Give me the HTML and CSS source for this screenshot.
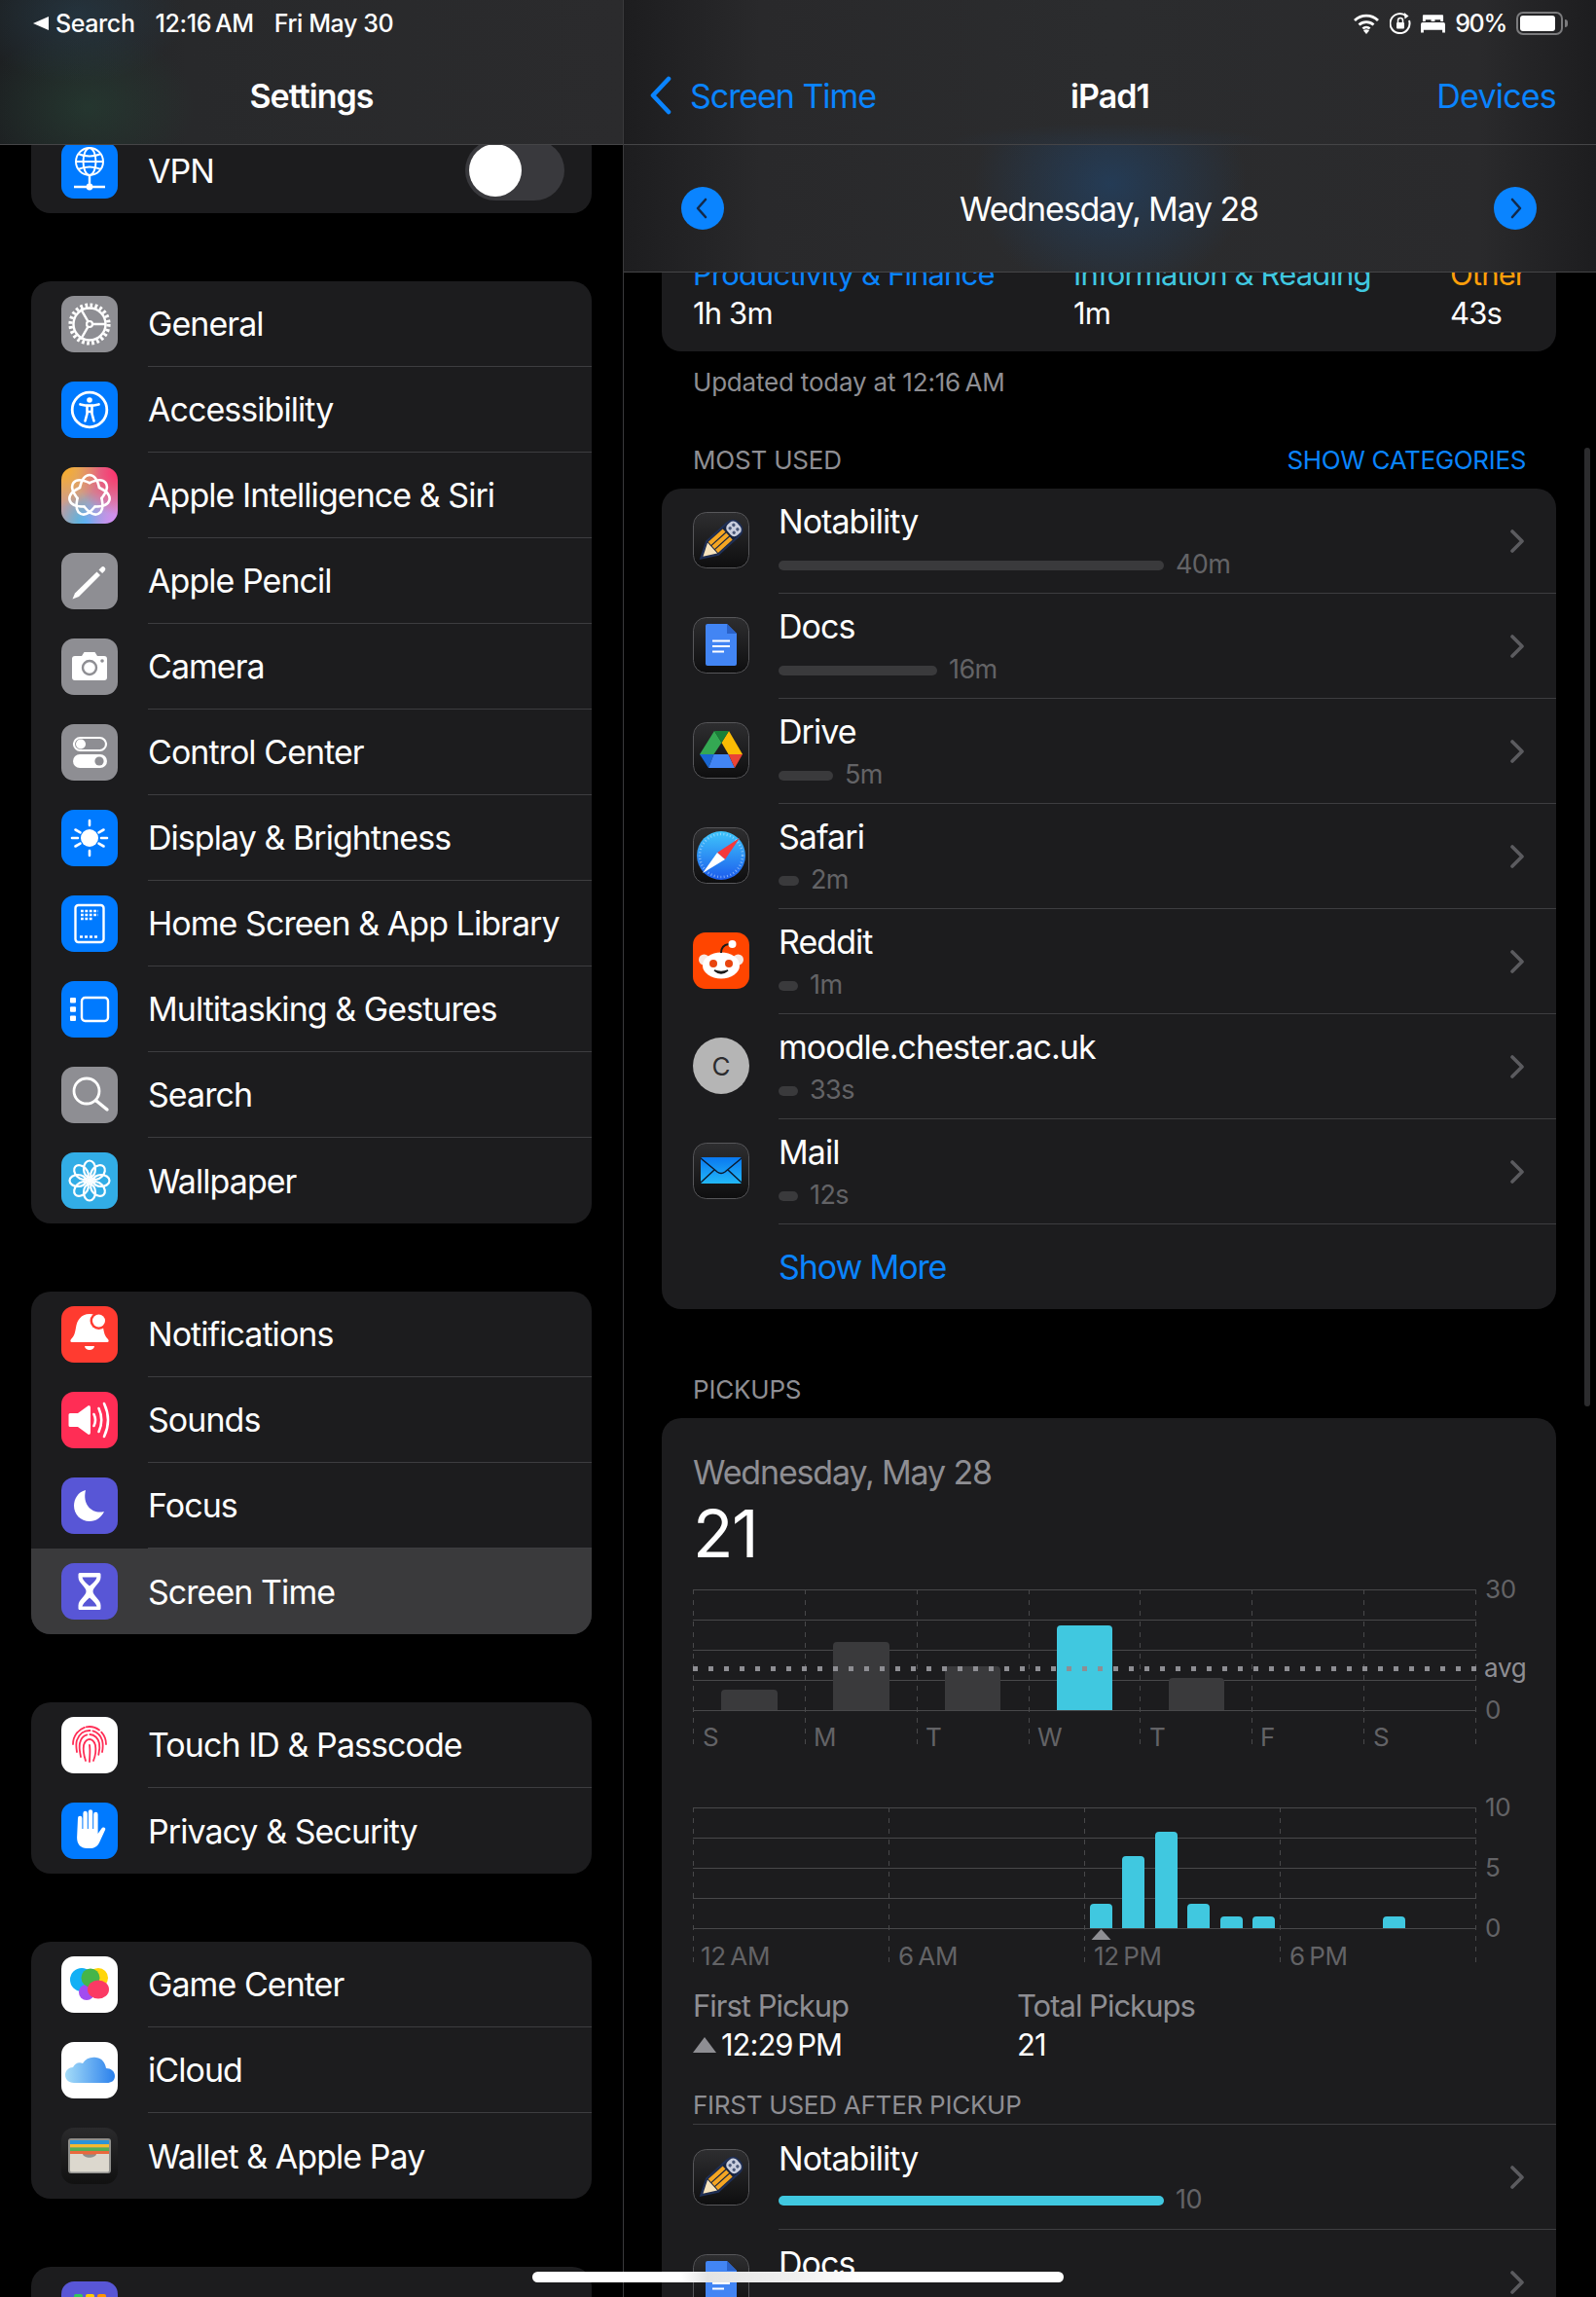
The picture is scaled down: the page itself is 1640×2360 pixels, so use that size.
FILE: index.html
```html
<!DOCTYPE html>
<html lang="en">
<head>
<meta charset="utf-8">
<title>Settings - Screen Time</title>
<link rel="stylesheet" href="styles.css">
</head>
<body>
<svg class="defs" width="0" height="0" aria-hidden="true">
  <defs>
    <linearGradient id="g-tile" x1="0" y1="0" x2="0" y2="1"><stop offset="0" stop-color="#2e2e30"/><stop offset="1" stop-color="#0e0e0f"/></linearGradient>
    <linearGradient id="g-safari" x1="0" y1="0" x2="0" y2="1"><stop offset="0" stop-color="#3fc6fb"/><stop offset="1" stop-color="#1c5ced"/></linearGradient>
    <linearGradient id="g-mail" x1="0" y1="0" x2="0" y2="1"><stop offset="0" stop-color="#0a78f0"/><stop offset="1" stop-color="#22b8f8"/></linearGradient>
    <linearGradient id="g-cloud" x1="0" y1="0" x2="1" y2="0"><stop offset="0" stop-color="#a5dcf8"/><stop offset="1" stop-color="#2a80ec"/></linearGradient>
    <symbol id="app-notability" viewBox="0 0 58 58">
      <rect x=".5" y=".5" width="57" height="57" rx="13" fill="url(#g-tile)" stroke="#57575a"/>
      <g transform="rotate(48 29 29)">
        <path d="M20 13q0-9 9-9t9 9v28l-9 16-9-16z" fill="#17233f" stroke="#1f2f55" stroke-width="2"/>
        <rect x="21.5" y="5" width="15" height="13" rx="5" fill="#c9cede"/>
        <circle cx="26" cy="9" r="1.7" fill="#4a5878"/><circle cx="32" cy="9" r="1.7" fill="#4a5878"/><circle cx="26" cy="14" r="1.7" fill="#4a5878"/><circle cx="32" cy="14" r="1.7" fill="#4a5878"/>
        <rect x="21.5" y="20" width="4.2" height="20" fill="#f5a623"/><rect x="26.9" y="20" width="4.2" height="20" fill="#f5a623"/><rect x="32.3" y="20" width="4.2" height="20" fill="#f5a623"/>
        <path d="M21.5 41h15l-7.500 13z" fill="#f6e3bd"/>
      </g>
    </symbol>
    <symbol id="app-docs" viewBox="0 0 58 58">
      <rect x=".5" y=".5" width="57" height="57" rx="13" fill="url(#g-tile)" stroke="#57575a"/>
      <path d="M15 7h20l10 10v31a2 2 0 0 1-2 2H15a2 2 0 0 1-2-2V9a2 2 0 0 1 2-2z" fill="#4285f4"/>
      <path d="M35 7l10 10H35z" fill="#2a62c8"/>
      <path d="M20 24.500h18M20 30h18M20 35.500h12" stroke="#fff" stroke-width="2.200"/>
    </symbol>
    <symbol id="chev" viewBox="0 0 14 24"><path d="M2 2l10 10L2 22" fill="none" stroke="#5b5b5f" stroke-width="3.600" stroke-linecap="round" stroke-linejoin="round"/></symbol>
  </defs>
</svg>

<div class="ipad">
  <aside class="sidebar">
    <header class="glass glass-left">
      <div class="status">
        <span class="back-tri"></span><span class="status-search">Search</span>
        <span class="status-time">12:16&#8201;AM</span>
        <span class="status-date">Fri May 30</span>
      </div>
      <div class="nav-title-left">Settings</div>
    </header>

    <div class="list">
      <section class="group">
        <div class="row">
          <svg class="ico bg-blue" viewBox="0 0 58 58"><g fill="none" stroke="#fff" stroke-width="2"><circle cx="29" cy="20" r="14"/><ellipse cx="29" cy="20" rx="6.500" ry="14"/><path d="M17 12q12 5 24 0M15.500 20h27M17 28q12-5 24 0"/></g><path d="M29 34v12M13 46h32" stroke="#fff" stroke-width="2.400"/><circle cx="29" cy="46" r="3.400" fill="#fff"/></svg>
          <div class="label label-flex">VPN<span class="toggle"><span class="knob"></span></span></div>
        </div>
      </section>

      <section class="group">
        <div class="row">
          <svg class="ico bg-gray" viewBox="0 0 58 58"><g fill="none" stroke="#fff"><circle cx="29" cy="29" r="19.500" stroke-width="4.200" stroke-dasharray="2.700 2.400"/><circle cx="29" cy="29" r="16.500" stroke-width="2.400"/><path d="M32 29h14M27.500 31.600l-7.500 13M27.500 26.400l-7.500-13" stroke-width="2.400"/><circle cx="29" cy="29" r="3" stroke-width="2.200"/></g></svg>
          <div class="label">General</div>
        </div>
        <div class="row">
          <svg class="ico bg-blue" viewBox="0 0 58 58"><circle cx="29" cy="29" r="17.800" fill="none" stroke="#fff" stroke-width="2.800"/><circle cx="29" cy="19" r="2.800" fill="#fff"/><path d="M19.500 23.500q9.500 2.500 19 0" fill="none" stroke="#fff" stroke-width="2.800" stroke-linecap="round"/><path d="M26.500 25v8l-2 7.500M31.500 25v8l2 7.500M26.500 31h5" fill="none" stroke="#fff" stroke-width="2.600" stroke-linecap="round"/></svg>
          <div class="label">Accessibility</div>
        </div>
        <div class="row">
          <svg class="ico bg-ai" viewBox="0 0 58 58"><g fill="none" stroke="#fff" stroke-width="2.600" stroke-linecap="round"><path d="M19 21Q22 8 29 8t10 13"/><path transform="rotate(51.430 29 29)" d="M19 21Q22 8 29 8t10 13"/><path transform="rotate(102.860 29 29)" d="M19 21Q22 8 29 8t10 13"/><path transform="rotate(154.290 29 29)" d="M19 21Q22 8 29 8t10 13"/><path transform="rotate(205.710 29 29)" d="M19 21Q22 8 29 8t10 13"/><path transform="rotate(257.140 29 29)" d="M19 21Q22 8 29 8t10 13"/><path transform="rotate(308.570 29 29)" d="M19 21Q22 8 29 8t10 13"/></g></svg>
          <div class="label">Apple Intelligence &amp; Siri</div>
        </div>
        <div class="row">
          <svg class="ico bg-gray" viewBox="0 0 58 58"><path d="M11.500 47.500l2.500-6L36.500 19.500l3.500 3.500L18 45z" fill="#fff"/><path d="M38.500 17.500l2.500-2.500a2.500 2.500 0 0 1 3.600 0 2.500 2.500 0 0 1 0 3.500l-2.500 2.500z" fill="#fff"/></svg>
          <div class="label">Apple Pencil</div>
        </div>
        <div class="row">
          <svg class="ico bg-gray" viewBox="0 0 58 58"><path d="M14 18h7l2.500-4h11l2.500 4h7a3 3 0 0 1 3 3v19a3 3 0 0 1-3 3H14a3 3 0 0 1-3-3V21a3 3 0 0 1 3-3z" fill="#fff"/><circle cx="29" cy="30" r="7" fill="none" stroke="#8e8e93" stroke-width="2.400"/><circle cx="42" cy="23" r="1.800" fill="#8e8e93"/></svg>
          <div class="label">Camera</div>
        </div>
        <div class="row">
          <svg class="ico bg-gray" viewBox="0 0 58 58"><rect x="13" y="14" width="33" height="13" rx="6.500" fill="none" stroke="#fff" stroke-width="2.200"/><circle cx="20" cy="20.500" r="5" fill="#fff"/><rect x="12" y="31" width="35" height="14" rx="7" fill="#fff"/><circle cx="39" cy="38" r="4.600" fill="#8e8e93"/></svg>
          <div class="label">Control Center</div>
        </div>
        <div class="row">
          <svg class="ico bg-blue" viewBox="0 0 58 58"><circle cx="29" cy="29" r="9" fill="#fff"/><path d="M29 11v5M29 42v5M11 29h6M41 29h6M14.500 20.500l5 2.800M38.500 34.700l5 2.800M14.500 37.500l5-2.800M38.500 23.300l5-2.800" stroke="#fff" stroke-width="2.600" stroke-linecap="round"/></svg>
          <div class="label">Display &amp; Brightness</div>
        </div>
        <div class="row">
          <svg class="ico bg-blue" viewBox="0 0 58 58"><rect x="14.500" y="10" width="29" height="38" rx="3" fill="none" stroke="#fff" stroke-width="2.400"/><path d="M20 16h18M20 20h18M20 24h12" stroke="#fff" stroke-width="2.400" stroke-dasharray="2.800 1.600"/><path d="M19 42.500h20" stroke="#fff" stroke-width="2.400" stroke-dasharray="3 2"/></svg>
          <div class="label">Home Screen &amp; App Library</div>
        </div>
        <div class="row">
          <svg class="ico bg-blue" viewBox="0 0 58 58"><rect x="21" y="17" width="27" height="24" rx="3.500" fill="none" stroke="#fff" stroke-width="2.400"/><rect x="9" y="17" width="6" height="5.500" rx="1" fill="#fff"/><rect x="9" y="26.300" width="6" height="5.500" rx="1" fill="#fff"/><rect x="9" y="35.500" width="6" height="5.500" rx="1" fill="#fff"/></svg>
          <div class="label">Multitasking &amp; Gestures</div>
        </div>
        <div class="row">
          <svg class="ico bg-gray" viewBox="0 0 58 58"><circle cx="26" cy="25" r="13" fill="none" stroke="#fff" stroke-width="2.800"/><path d="M36 35l11 9" stroke="#fff" stroke-width="3.400" stroke-linecap="round"/></svg>
          <div class="label">Search</div>
        </div>
        <div class="row">
          <svg class="ico bg-cyan" viewBox="0 0 58 58"><g fill="none" stroke="#fff" stroke-width="2.200"><ellipse cx="29" cy="17" rx="6" ry="8.500"/><ellipse cx="29" cy="41" rx="6" ry="8.500"/><ellipse cx="17" cy="29" rx="8.500" ry="6"/><ellipse cx="41" cy="29" rx="8.500" ry="6"/><ellipse cx="20.500" cy="20.500" rx="6" ry="8.500" transform="rotate(-45 20.500 20.500)"/><ellipse cx="37.500" cy="20.500" rx="6" ry="8.500" transform="rotate(45 37.500 20.500)"/><ellipse cx="20.500" cy="37.500" rx="6" ry="8.500" transform="rotate(45 20.500 37.500)"/><ellipse cx="37.500" cy="37.500" rx="6" ry="8.500" transform="rotate(-45 37.500 37.500)"/></g><circle cx="29" cy="29" r="3" fill="#fff"/></svg>
          <div class="label">Wallpaper</div>
        </div>
      </section>

      <section class="group">
        <div class="row">
          <svg class="ico bg-red" viewBox="0 0 58 58"><path d="M29 8c-9 0-13 7-14 14-1 6-2 9-5 12-1 1-1 3 1 3h36c2 0 2-2 1-3-3-3-4-6-5-12-1-7-5-14-14-14z" fill="#fff"/><path d="M24 41h10a5 4 0 0 1-10 0z" fill="#fff"/><circle cx="38.500" cy="15" r="9" fill="#ff3b30"/><circle cx="38.500" cy="15" r="6.500" fill="#fff"/></svg>
          <div class="label">Notifications</div>
        </div>
        <div class="row">
          <svg class="ico bg-pink" viewBox="0 0 58 58"><path d="M9 22h8l11-8a2 2 0 0 1 2 2v26a2 2 0 0 1-2 2L17 36H9a1.500 1.500 0 0 1-1.500-1.500v-11A1.500 1.500 0 0 1 9 22z" fill="#fff"/><path d="M33.500 23q3 6 0 12M38.500 17q5.500 12 0 24M44 12q8 17 0 34" fill="none" stroke="#fff" stroke-width="2.600" stroke-linecap="round"/></svg>
          <div class="label">Sounds</div>
        </div>
        <div class="row">
          <svg class="ico bg-indigo" viewBox="0 0 58 58"><path d="M25 13C17 15 13 22 13 29c0 9 7 16 16 16 7 0 12-4 15-10-10 3-23-5-19-22z" fill="#fff"/></svg>
          <div class="label">Focus</div>
        </div>
        <div class="row row-selected">
          <svg class="ico bg-indigo" viewBox="0 0 58 58"><path d="M19 10h20a1.500 1.500 0 0 1 1.500 1.500v3c0 6-8 10-8 14.500s8 8.500 8 14.500v3A1.500 1.500 0 0 1 39 48H19a1.500 1.500 0 0 1-1.500-1.500v-3c0-6 8-10 8-14.500s-8-8.500-8-14.500v-3A1.500 1.500 0 0 1 19 10z" fill="#fff"/><path d="M21.500 14.500h15q-1 4-7.500 9-6.500-5-7.500-9zM21.500 44.500q1-3.500 7.500-9 6.500 5.500 7.500 9z" fill="#5856d6"/></svg>
          <div class="label">Screen Time</div>
        </div>
      </section>

      <section class="group">
        <div class="row">
          <svg class="ico bg-white" viewBox="0 0 58 58"><g fill="none" stroke="#ff2d55" stroke-width="1.800" stroke-linecap="round"><path d="M12 28C12 18 20 10 29 10s17 8 17 18" stroke-dasharray="22 2 14 3"/><path d="M16 36c-1-6-1-9 0-12 2-6 7-10 13-10s11 4 13 10c1 4 1 7 0 12" stroke-dasharray="30 3"/><path d="M20 41c-1-6-2-9-1-14 1-5 5-9 10-9s9 4 10 9c1 5 0 9-1 13" stroke-dasharray="26 3"/><path d="M25 45c-2-6-3-10-2-16 1-3 3-6 6-6s5 3 6 6c1 6 0 11-2 16"/><path d="M29 29c1 6 0 12 0 17"/></g></svg>
          <div class="label">Touch ID &amp; Passcode</div>
        </div>
        <div class="row">
          <svg class="ico bg-blue" viewBox="0 0 58 58"><path d="M17 16a2.200 2.200 0 0 1 4.400 0v11h1V11a2.200 2.200 0 0 1 4.400 0v16h1V9.500a2.200 2.200 0 0 1 4.400 0V27h1V12a2.200 2.200 0 0 1 4.400 0v20l3.500-5c2-3 5-1 4 1l-6 13c-2 4-5 6-10 6h-3c-6 0-10-4-10-11z" fill="#fff"/></svg>
          <div class="label">Privacy &amp; Security</div>
        </div>
      </section>

      <section class="group">
        <div class="row">
          <svg class="ico bg-white" viewBox="0 0 58 58"><circle cx="38" cy="22" r="10" fill="#ffd60a"/><circle cx="21" cy="24" r="12" fill="#12b0f5"/><circle cx="26" cy="37" r="8" fill="#a24cf0"/><circle cx="30" cy="22" r="9.500" fill="#45b54a"/><ellipse cx="38" cy="34" rx="11" ry="9.500" fill="#fb3a64"/></svg>
          <div class="label">Game Center</div>
        </div>
        <div class="row">
          <svg class="ico bg-white" viewBox="0 0 58 58"><path d="M13 42C7 42 4 38 4 34c0-5 4-8 8-8 2-4 6-6 10-4 3-5 8-7 14-6 6 1 9 5 10 11 5 0 9 3 9 8s-4 7-8 7z" fill="url(#g-cloud)"/></svg>
          <div class="label">iCloud</div>
        </div>
        <div class="row">
          <svg class="ico bg-wallet" viewBox="0 0 58 58"><rect x="7" y="11" width="44" height="36" rx="3" fill="#8f8f8c"/><rect x="9" y="13" width="40" height="4" fill="#2b93d8"/><rect x="9" y="17" width="40" height="3.500" fill="#f5b82e"/><rect x="9" y="20.500" width="40" height="3.500" fill="#53ad54"/><rect x="9" y="24" width="40" height="3.500" fill="#e9683d"/><path d="M9 27h13c1 5 13 5 14 0h13v17a1.500 1.500 0 0 1-1.500 1.500h-37A1.500 1.500 0 0 1 9 44z" fill="#dcd8ce"/></svg>
          <div class="label">Wallet &amp; Apple Pay</div>
        </div>
      </section>

      <section class="group">
        <div class="row">
          <svg class="ico bg-indigo" viewBox="0 0 58 58"><rect x="13" y="13" width="9" height="9" rx="2" fill="#34c759"/><rect x="25" y="13" width="9" height="9" rx="2" fill="#ffcc00"/><rect x="37" y="13" width="9" height="9" rx="2" fill="#ff9500"/></svg>
          <div class="label"></div>
        </div>
      </section>
    </div>
  </aside>

  <main class="detail">
    <header class="glass glass-right">
      <div class="status status-right">
        <svg class="st-wifi" viewBox="0 0 28 22"><path d="M2 8a17 17 0 0 1 24 0M6.500 12.500a11 11 0 0 1 15 0M10.500 16.500a5 5 0 0 1 7 0" fill="none" stroke="#fff" stroke-width="2.800"/><path d="M14 22l-3-3.500a4 4 0 0 1 6 0z" fill="#fff"/></svg>
        <svg class="st-lock" viewBox="0 0 22 22"><path d="M17 3.500A10 10 0 1 0 20 8" fill="none" stroke="#fff" stroke-width="2"/><path d="M15 0l4.500 3.500-4 3z" fill="#fff"/><rect x="7" y="10" width="8" height="6.500" rx="1" fill="#fff"/><path d="M8.500 10V8a2.500 2.500 0 0 1 5 0v2" fill="none" stroke="#fff" stroke-width="1.500"/></svg>
        <svg class="st-bed" viewBox="0 0 26 20"><path d="M3 1h20a1 1 0 0 1 1 1v6h-3V6h-6v2h-4V6H5v2H2V2a1 1 0 0 1 1-1z" fill="#fff"/><path d="M2 9h22a2 2 0 0 1 2 2v9h-3v-3H3v3H0v-9a2 2 0 0 1 2-2z" fill="#fff"/></svg>
        <span class="st-pct">90%</span>
        <span class="battery"><span class="battery-fill"></span></span>
      </div>
      <nav class="nav-right">
        <a class="back"><svg class="back-chev" viewBox="0 0 24 40"><path d="M20 3L4 20l16 17" fill="none" stroke="#0a84ff" stroke-width="4.600" stroke-linecap="round" stroke-linejoin="round"/></svg>Screen Time</a>
        <div class="nav-title">iPad1</div>
        <a class="devices">Devices</a>
      </nav>
    </header>
    <div class="glass date-bar">
      <svg class="circ" viewBox="0 0 44 44"><circle cx="22" cy="22" r="22" fill="#0a84ff"/><path d="M25 13l-8 9 8 9" fill="none" stroke="#13294a" stroke-width="2.600" stroke-linecap="round" stroke-linejoin="round"/></svg>
      <div class="date-text">Wednesday, May 28</div>
      <svg class="circ" viewBox="0 0 44 44"><circle cx="22" cy="22" r="22" fill="#0a84ff"/><path d="M19 13l8 9-8 9" fill="none" stroke="#13294a" stroke-width="2.600" stroke-linecap="round" stroke-linejoin="round"/></svg>
    </div>

    <div class="content">
      <section class="card summary">
        <div class="sum-col sum-a"><div class="c-blue">Productivity &amp; Finance</div><div>1h 3m</div></div>
        <div class="sum-col sum-b"><div class="c-cyan">Information &amp; Reading</div><div>1m</div></div>
        <div class="sum-col"><div class="c-orange">Other</div><div>43s</div></div>
      </section>
      <div class="updated">Updated today at 12:16&#8201;AM</div>

      <div class="sec-head"><span>MOST USED</span><a class="c-blue">SHOW CATEGORIES</a></div>
      <section class="card used">
        <div class="app">
          <svg class="ico"><use href="#app-notability"/></svg>
          <div class="app-body"><div class="app-main"><div class="app-name">Notability</div><div class="usage"><span class="bar" style="width:396px"></span><span class="val">40m</span></div></div><svg class="chev"><use href="#chev"/></svg></div>
        </div>
        <div class="app">
          <svg class="ico"><use href="#app-docs"/></svg>
          <div class="app-body"><div class="app-main"><div class="app-name">Docs</div><div class="usage"><span class="bar" style="width:163px"></span><span class="val">16m</span></div></div><svg class="chev"><use href="#chev"/></svg></div>
        </div>
        <div class="app">
          <svg class="ico" viewBox="0 0 58 58"><rect x=".5" y=".5" width="57" height="57" rx="13" fill="url(#g-tile)" stroke="#57575a"/><polygon points="22,9 29.500,21 21.500,33 7,33" fill="#34a853"/><polygon points="37,9 51,33 36.500,33 29.500,21" fill="#fbbc04"/><polygon points="22,9 37,9 29.500,21" fill="#188038"/><polygon points="7,33 21.500,33 16,47" fill="#1967d2"/><polygon points="21.500,33 36.500,33 43,47 16,47" fill="#4285f4"/><polygon points="36.500,33 51,33 43,47" fill="#ea4335"/></svg>
          <div class="app-body"><div class="app-main"><div class="app-name">Drive</div><div class="usage"><span class="bar" style="width:56px"></span><span class="val">5m</span></div></div><svg class="chev"><use href="#chev"/></svg></div>
        </div>
        <div class="app">
          <svg class="ico" viewBox="0 0 58 58"><rect x=".5" y=".5" width="57" height="57" rx="13" fill="url(#g-tile)" stroke="#57575a"/><circle cx="29" cy="29" r="25" fill="url(#g-safari)"/><circle cx="29" cy="29" r="22" fill="none" stroke="#cfe8ff" stroke-opacity=".55" stroke-width="2.500" stroke-dasharray="1 2.400"/><polygon points="48,11 33,33 25,26" fill="#f5383b"/><polygon points="10,47 25,26 33,33" fill="#fff"/></svg>
          <div class="app-body"><div class="app-main"><div class="app-name">Safari</div><div class="usage"><span class="bar" style="width:21px"></span><span class="val">2m</span></div></div><svg class="chev"><use href="#chev"/></svg></div>
        </div>
        <div class="app">
          <svg class="ico bg-reddit" viewBox="0 0 58 58"><circle cx="11.500" cy="28" r="5.500" fill="#f6e9e4"/><circle cx="46.500" cy="28" r="5.500" fill="#f6e9e4"/><ellipse cx="29" cy="34" rx="19" ry="13.500" fill="#fff"/><circle cx="21" cy="32" r="4" fill="#e8450f"/><circle cx="37" cy="32" r="4" fill="#e8450f"/><path d="M22 39q7 6 14 0q-7 3-14 0z" fill="#1a1a1a" stroke="#1a1a1a" stroke-width="1.500"/><path d="M29 21q0-8 8-9" fill="none" stroke="#1a1a1a" stroke-width="2"/><circle cx="40.500" cy="12" r="4" fill="#fff"/></svg>
          <div class="app-body"><div class="app-main"><div class="app-name">Reddit</div><div class="usage"><span class="bar" style="width:20px"></span><span class="val">1m</span></div></div><svg class="chev"><use href="#chev"/></svg></div>
        </div>
        <div class="app">
          <div class="ico site-ico">C</div>
          <div class="app-body"><div class="app-main"><div class="app-name">moodle.chester.ac.uk</div><div class="usage"><span class="bar" style="width:20px"></span><span class="val">33s</span></div></div><svg class="chev"><use href="#chev"/></svg></div>
        </div>
        <div class="app">
          <svg class="ico" viewBox="0 0 58 58"><rect x=".5" y=".5" width="57" height="57" rx="13" fill="url(#g-tile)" stroke="#57575a"/><rect x="8" y="15" width="42" height="27" rx="1.500" fill="url(#g-mail)"/><path d="M8 16l17 14q4 3 8 0l17-14M8 41l14-13M50 41L36 28" fill="none" stroke="#0b1a2e" stroke-width="1.500"/></svg>
          <div class="app-body"><div class="app-main"><div class="app-name">Mail</div><div class="usage"><span class="bar" style="width:20px"></span><span class="val">12s</span></div></div><svg class="chev"><use href="#chev"/></svg></div>
        </div>
        <div class="show-more c-blue">Show More</div>
      </section>

      <div class="sec-head sec-pickups"><span>PICKUPS</span></div>
      <section class="card pickups">
        <div class="pk-date">Wednesday, May 28</div>
        <div class="pk-num">21</div>

        <svg class="chart" viewBox="712 1625 887 175">
          <g class="grid-h"><path d="M712 1633.500h805M712 1664.500h805M712 1695.500h805M712 1726.500h805M712 1757.500h805"/></g>
          <g class="grid-v"><path d="M712.500 1633v164M827.500 1633v164M942.500 1633v164M1057.500 1633v164M1171.500 1633v164M1286.500 1633v164M1401.500 1633v164M1516.500 1633v164"/></g>
          <path class="b-gray" d="M741 1757v-17a4 4 0 0 1 4-4h50a4 4 0 0 1 4 4v17zM856 1757v-66a4 4 0 0 1 4-4h50a4 4 0 0 1 4 4v66zM971 1757v-41a4 4 0 0 1 4-4h49a4 4 0 0 1 4 4v41zM1201 1757v-29a4 4 0 0 1 4-4h49a4 4 0 0 1 4 4v29z"/>
          <path class="b-cyan" d="M1086 1757v-83a4 4 0 0 1 4-4h49a4 4 0 0 1 4 4v83z"/>
          <path class="avg-line" d="M712 1714.500h805"/>
          <g class="axis"><text x="722" y="1794">S</text><text x="836" y="1794">M</text><text x="951" y="1794">T</text><text x="1066" y="1794">W</text><text x="1181" y="1794">T</text><text x="1295" y="1794">F</text><text x="1411" y="1794">S</text><text x="1526" y="1642">30</text><text x="1526" y="1766">0</text></g>
          <text class="axis-avg" x="1525" y="1723">avg</text>
        </svg>

        <svg class="chart chart-2" viewBox="712 1849 887 175">
          <g class="grid-h"><path d="M712 1857.500h805M712 1888.500h805M712 1919.500h805M712 1950.500h805M712 1981.500h805"/></g>
          <g class="grid-v"><path d="M712.500 1857v164M913.500 1857v164M1114.500 1857v164M1315.500 1857v164M1516.500 1857v164"/></g>
          <path class="b-cyan" d="M1120 1981v-21a4 4 0 0 1 4-4h15a4 4 0 0 1 4 4v21zM1153 1981v-70a4 4 0 0 1 4-4h15a4 4 0 0 1 4 4v70zM1187 1981v-95a4 4 0 0 1 4-4h15a4 4 0 0 1 4 4v95zM1220 1981v-21a4 4 0 0 1 4-4h15a4 4 0 0 1 4 4v21zM1254 1981v-8a4 4 0 0 1 4-4h15a4 4 0 0 1 4 4v8zM1287 1981v-8a4 4 0 0 1 4-4h15a4 4 0 0 1 4 4v8zM1421 1981v-8a4 4 0 0 1 4-4h15a4 4 0 0 1 4 4v8z"/>
          <polygon class="tri" points="1131.500,1982 1141.500,1993 1121.500,1993"/>
          <g class="axis"><text x="720" y="2019">12&#8201;AM</text><text x="923" y="2019">6&#8201;AM</text><text x="1124" y="2019">12&#8201;PM</text><text x="1325" y="2019">6&#8201;PM</text><text x="1526" y="1866">10</text><text x="1526" y="1928">5</text><text x="1526" y="1990">0</text></g>
        </svg>

        <div class="pk-stats">
          <div class="pk-stat pk-first"><div class="muted">First Pickup</div><div class="pk-val"><span class="pk-tri"></span>12:29&#8201;PM</div></div>
          <div class="pk-stat"><div class="muted">Total Pickups</div><div class="pk-val">21</div></div>
        </div>
        <div class="first-used">FIRST USED AFTER PICKUP</div>

        <div class="pk-apps">
          <div class="app app-in">
            <svg class="ico"><use href="#app-notability"/></svg>
            <div class="app-body"><div class="app-main"><div class="app-name">Notability</div><div class="usage"><span class="bar bar-cyan" style="width:396px"></span><span class="val">10</span></div></div><svg class="chev"><use href="#chev"/></svg></div>
          </div>
          <div class="app app-in">
            <svg class="ico"><use href="#app-docs"/></svg>
            <div class="app-body"><div class="app-main"><div class="app-name">Docs</div></div><svg class="chev"><use href="#chev"/></svg></div>
          </div>
        </div>
      </section>
    </div>
    <div class="scrollbar"></div>
  </main>

  <div class="home-indicator"></div>
</div>
</body>
</html>
```

FILE: styles.css
```css
* { box-sizing: border-box; }
html, body { margin: 0; padding: 0; background: #000; }
body {
  width: 1640px;
  height: 2360px;
  overflow: hidden;
  color: #fff;
  font-family: Inter, "Liberation Sans", sans-serif;
  font-size: 34px;
  letter-spacing: -0.95px;
}
.defs { position: absolute; }

.ipad { position: relative; display: flex; width: 1640px; height: 2360px; overflow: hidden; background: #000; }

/* glass bars */
.glass { position: absolute; left: 0; right: 0; z-index: 5; }
.glass-left {
  top: 0; height: 149px;
  border-bottom: 1px solid #454547;
  background:
    radial-gradient(ellipse 110px 70px at 80px 15px, rgba(40, 70, 90, .45), transparent),
    radial-gradient(ellipse 110px 80px at 90px 110px, rgba(40, 80, 60, .4), transparent),
    linear-gradient(90deg, #1d2022 0, #28292b 30%, #2b2b2d 100%);
}
.glass-right {
  top: 0; height: 149px;
  border-bottom: 1px solid #454547;
  background:
    radial-gradient(ellipse 170px 22px at 500px 149px, rgba(35, 70, 110, .25), transparent),
    linear-gradient(90deg, #1d1d1f 0, #29292b 14%, #2b2c2e 50%, #2a2a2c 88%, #1d1d1f 100%);
}
.date-bar {
  top: 149px; height: 131px;
  border-bottom: 1px solid #454547;
  display: flex; align-items: center; justify-content: space-between;
  padding: 0 61px 0 59px;
  background:
    radial-gradient(ellipse 140px 115px at 500px 40px, rgba(30, 75, 125, .5), transparent),
    linear-gradient(90deg, #1d1d1f 0, #29292b 14%, #2b2c2e 50%, #2a2a2c 88%, #1d1d1f 100%);
}
.circ { width: 44px; height: 44px; flex: none; }
.date-text { font-size: 34px; letter-spacing: -1.15px; }

/* status bar */
.status { display: flex; align-items: center; height: 48px; font-size: 25px; letter-spacing: -.4px; font-weight: 500; }
.back-tri { width: 0; height: 0; border-top: 7.500px solid transparent; border-bottom: 7.500px solid transparent; border-right: 16px solid #fff; margin-left: 34px; }
.status-search { margin-left: 7px; }
.status-time { margin-left: 21px; }
.status-date { margin-left: 21px; }
.status-right { justify-content: flex-end; padding-right: 30px; }
.st-wifi { width: 28px; height: 22px; }
.st-lock { width: 22px; height: 22px; margin-left: 10px; }
.st-bed { width: 25px; height: 20px; margin-left: 10px; }
.st-pct { margin-left: 10px; letter-spacing: -1.3px; }
.battery { position: relative; width: 48px; height: 24px; margin-left: 10px; margin-right: 4px; border: 2px solid #7b7b7d; border-radius: 7px; padding: 2px; }
.battery::after { content: ""; position: absolute; left: 48px; top: 6px; width: 3px; height: 8px; background: #7b7b7d; border-radius: 0 3px 3px 0; }
.battery-fill { display: block; width: 90%; height: 100%; background: #fff; border-radius: 3px; }

/* nav */
.nav-title-left { height: 100px; display: flex; align-items: center; justify-content: center; font-weight: 600; }
.nav-right { display: grid; grid-template-columns: 1fr auto 1fr; align-items: center; height: 100px; padding: 0 41px; color: #0a84ff; }
.nav-title { color: #fff; font-weight: 600; }
.back { display: flex; align-items: center; gap: 18px; margin-left: -15px; letter-spacing: -1.05px; }
.back-chev { width: 24px; height: 40px; flex: none; }
.devices { justify-self: end; letter-spacing: -.8px; }

/* sidebar */
.sidebar { position: relative; flex: none; width: 641px; height: 2360px; border-right: 1px solid #3a3a3c; overflow: hidden; }
.list { padding: 131px 32px 0; }
.group { background: #1c1c1e; border-radius: 20px; overflow: hidden; margin-bottom: 70px; }
.row { display: flex; align-items: center; height: 88px; padding-left: 31px; gap: 31px; }
.row-selected { background: #3a3a3c; }
.row-selected .label { border-bottom: 0; }
.label { flex: 1; align-self: stretch; display: flex; align-items: center; border-bottom: 1px solid #3d3d40; }
.row:last-child .label { border-bottom: 0; }
.label-flex { justify-content: space-between; padding-right: 28px; }

.ico { display: block; flex: none; width: 58px; height: 58px; border-radius: 13px; }
.bg-blue { background: #007aff; }
.bg-gray { background: #8e8e93; }
.bg-cyan { background: #32ade6; }
.bg-red { background: #ff3b30; }
.bg-pink { background: #ff2d55; }
.bg-indigo { background: #5856d6; }
.bg-white { background: #fff; }
.bg-wallet { background: linear-gradient(#2a2a2c, #111); }
.bg-reddit { background: #ff4500; }
.bg-ai {
  background:
    radial-gradient(circle at 0 0, #ffb01f 0, transparent 50%),
    radial-gradient(circle at 100% 10%, #ff2f6d 0, transparent 55%),
    radial-gradient(circle at 100% 100%, #d58cff 0, transparent 50%),
    radial-gradient(circle at 45% 100%, #3ebcf5 0, transparent 50%),
    #c79a9a;
}

.toggle { position: relative; width: 102px; height: 62px; border-radius: 31px; background: #39393d; }
.knob { position: absolute; left: 4px; top: 4px; width: 54px; height: 54px; border-radius: 50%; background: #fff; }

/* detail */
.detail { position: relative; flex: 1; height: 2360px; overflow: hidden; }
.content { padding: 200px 41px 0 39px; }
.card { background: #1c1c1e; border-radius: 20px; overflow: hidden; }
.c-blue { color: #0a84ff; }
.c-cyan { color: #40c8e0; }
.c-orange { color: #ff9f0a; }

.summary { display: flex; padding: 62px 32px 19px; line-height: 40px; font-size: 31px; letter-spacing: -.85px; }
.sum-a { width: 391px; }
.sum-b { width: 387px; }
.sum-col { flex: none; white-space: nowrap; }

.updated { margin-top: 16px; padding-left: 32px; line-height: 32px; font-size: 26px; letter-spacing: -.2px; color: #8e8e93; }
.sec-head { display: flex; justify-content: space-between; height: 32px; line-height: 32px; margin: 48px 0 13px; padding: 0 31px 0 32px; font-size: 26px; letter-spacing: -.2px; color: #8e8e93; }
.sec-head a { letter-spacing: -.35px; }
.sec-pickups { margin: 67px 0 13px; }

.app { display: flex; align-items: center; height: 108px; padding-left: 32px; gap: 30px; }
.app-body { flex: 1; align-self: stretch; display: flex; align-items: center; border-bottom: 1px solid #3d3d40; padding-right: 33px; }
.app-main { flex: 1; align-self: flex-start; padding-top: 14px; }
.app-name { line-height: 40px; }
.usage { display: flex; align-items: center; gap: 12px; height: 32px; margin-top: 9px; }
.bar { height: 10px; border-radius: 5px; background: #3a3a3c; flex: none; }
.bar-cyan { background: #40c8e0; }
.val { font-size: 27px; letter-spacing: -.6px; color: #636366; margin-top: -3px; }
.chev { width: 14px; height: 24px; flex: none; }
.used .ico { margin-bottom: 2px; }
.site-ico { display: flex; align-items: center; justify-content: center; border-radius: 50%; background: #b5b5b5; color: #2c2c2e; font-size: 26px; letter-spacing: 0; }
.show-more { height: 87px; display: flex; align-items: center; padding-left: 120px; letter-spacing: -1.1px; }

/* pickups */
.pickups { padding-top: 36px; }
.pk-date { padding-left: 32px; line-height: 40px; color: #8e8e93; letter-spacing: -1.15px; }
.pk-num { padding-left: 32px; line-height: 84px; font-size: 68px; letter-spacing: -1.5px; }
.chart { display: block; width: 887px; height: 175px; margin: 8px 0 0 32px; overflow: visible; }
.chart-2 { margin-top: 49px; }
.grid-h path { stroke: #48484a; stroke-width: 1; fill: none; }
.grid-v path { stroke: #48484a; stroke-width: 1; fill: none; stroke-dasharray: 5 6; }
.b-gray { fill: #3a3a3c; }
.b-cyan { fill: #40c8e0; }
.avg-line { stroke: #8e8e93; stroke-width: 5; stroke-dasharray: 5 11; fill: none; }
.tri { fill: #8e8e93; }
.axis text { font-size: 26px; letter-spacing: -.3px; fill: #636366; }
.axis-avg { font-size: 26px; letter-spacing: -.3px; fill: #8e8e93; }

.pk-stats { display: flex; margin-top: 17px; padding-left: 32px; line-height: 40px; font-size: 31px; letter-spacing: -1px; }
.pk-first { width: 333px; }
.muted { color: #8e8e93; }
.pk-val { display: flex; align-items: center; }
.pk-tri { width: 0; height: 0; border-left: 12px solid transparent; border-right: 12px solid transparent; border-bottom: 16px solid #8e8e93; margin-right: 5px; }
.first-used { margin-top: 26px; padding-left: 32px; height: 35px; line-height: 32px; font-size: 26px; letter-spacing: -.25px; color: #8e8e93; }
.pk-apps { margin-left: 32px; border-top: 1px solid #3d3d40; }
.app-in { padding-left: 0; }
.app-in .app-main { padding-top: 15px; }
.app-in .usage { margin-top: 7px; }

.scrollbar { position: absolute; left: 987px; top: 460px; width: 6px; height: 985px; border-radius: 3px; background: #2c2c2e; }
.home-indicator {
  position: absolute; left: 547px; top: 2334px; width: 546px; height: 11px; border-radius: 6px; z-index: 9;
  background: linear-gradient(90deg, #fff 28%, #e4e4e4 33%, #f0f0f0 50%, #fff 62%);
}
```
